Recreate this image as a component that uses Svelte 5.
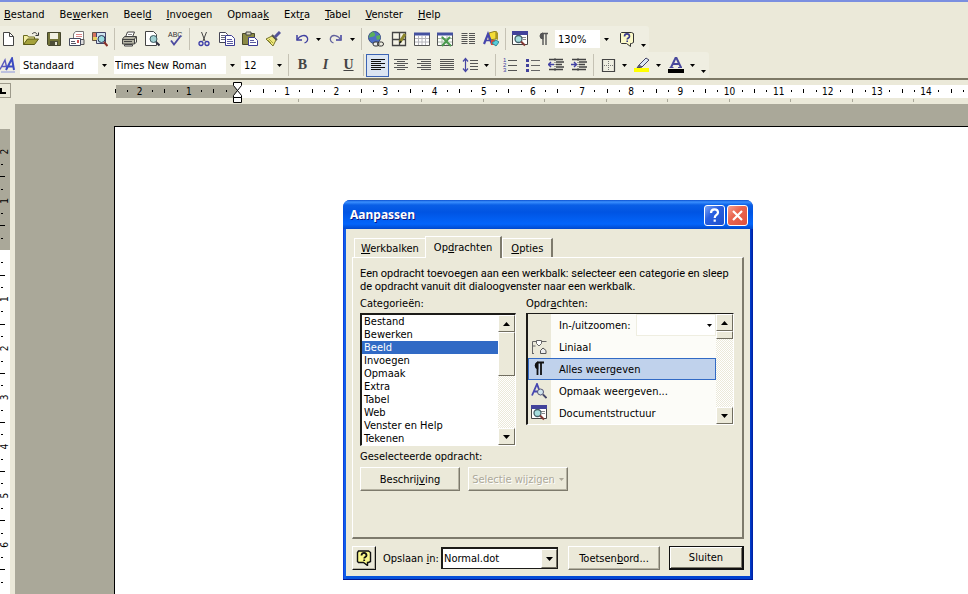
<script lang="ts">
  type ToolItem = {
    icon?: string;
    glyph?: string;
    title?: string;
    kind?: "sep" | "gap" | "arrow" | "more";
    active?: boolean;
  };

  const CM = 49.15;
  const TAB = 61.5;

  const menus = ["&Bestand", "Be&werken", "Beel&d", "&Invoegen", "Opmaa&k", "Ext&ra", "&Tabel", "&Venster", "&Help"];

  const standard: ToolItem[] = [
    { icon: "new", title: "Nieuw" },
    { icon: "open", title: "Openen" },
    { icon: "save", title: "Opslaan" },
    { icon: "mail", title: "E-mail" },
    { icon: "search", title: "Zoeken" },
    { kind: "sep" },
    { icon: "print", title: "Afdrukken" },
    { icon: "preview", title: "Afdrukvoorbeeld" },
    { icon: "spell", title: "Spelling" },
    { kind: "sep" },
    { icon: "cut", title: "Knippen" },
    { icon: "copy", title: "Kopiëren" },
    { icon: "paste", title: "Plakken" },
    { icon: "brush", title: "Opmaak kopiëren" },
    { kind: "gap" },
    { icon: "undo", title: "Ongedaan maken" },
    { kind: "arrow", title: "Acties" },
    { icon: "redo", title: "Opnieuw" },
    { kind: "arrow", title: "Acties" },
    { kind: "sep" },
    { icon: "link", title: "Hyperlink" },
    { icon: "borders", title: "Tabellen en randen" },
    { icon: "table", title: "Tabel invoegen" },
    { icon: "excel", title: "Excel-werkblad" },
    { icon: "columns", title: "Kolommen" },
    { icon: "drawing", title: "Tekenen" },
    { kind: "sep" },
    { icon: "docmap", title: "Documentstructuur" },
    { icon: "pilcrow", title: "Alles weergeven" },
  ];

  const formatting: ToolItem[] = [
    { kind: "sep" },
    { glyph: "B", title: "Vet" },
    { glyph: "I", title: "Cursief" },
    { glyph: "U", title: "Onderstrepen" },
    { kind: "sep" },
    { icon: "left", title: "Links uitlijnen", active: true },
    { icon: "center", title: "Centreren" },
    { icon: "right", title: "Rechts uitlijnen" },
    { icon: "justify", title: "Uitvullen" },
    { icon: "spacing", title: "Regelafstand" },
    { kind: "arrow", title: "Regelafstand kiezen" },
    { kind: "sep" },
    { icon: "numbers", title: "Nummering" },
    { icon: "bullets", title: "Opsommingstekens" },
    { icon: "outdent", title: "Inspringing verkleinen" },
    { icon: "indent", title: "Inspringing vergroten" },
    { kind: "sep" },
    { icon: "frame", title: "Rand" },
    { kind: "arrow", title: "Rand kiezen" },
    { icon: "marker", title: "Markeren" },
    { kind: "arrow", title: "Markeerkleur" },
    { icon: "color", title: "Tekstkleur" },
    { kind: "arrow", title: "Kleur kiezen" },
    { kind: "more", title: "Meer knoppen" },
  ];

  const categories = ["Bestand", "Bewerken", "Beeld", "Invoegen", "Opmaak", "Extra", "Tabel", "Web", "Venster en Help", "Tekenen"];

  const commands = [
    { name: "Liniaal", icon: "ruler" },
    { name: "Alles weergeven", icon: "pilcrowBold" },
    { name: "Opmaak weergeven...", icon: "reveal" },
    { name: "Documentstructuur", icon: "docmap" },
  ];

  let category = $state("Beeld");
  let command = $state("Alles weergeven");
  let rulerWidth = $state(0);
  let rulerHeight = $state(0);

  // from 2 cm before the margin; the last mark has ticks only when its number would not fit
  const marks = (length: number, zero: number) =>
    Array.from({ length: Math.max(0, Math.floor((length - zero - 8) / CM) + 4) }, (_, i) => {
      const n = i - 2;
      const at = zero + n * CM;
      return { n, at, text: n !== 0 && at + 8 <= length ? Math.abs(n) : "" };
    });

  const horizontalMarks = $derived(marks(rulerWidth, 126));
  const verticalMarks = $derived(marks(rulerHeight, 146));
  const tabMarks = $derived(Array.from({ length: Math.max(0, Math.ceil((rulerWidth - 186) / TAB)) }, (_, i) => i));

  const icons: Record<string, string> = {
    new: `<path d="M3.500 1.500h6l4 4v9h-10z" fill="#fff" stroke="#444"/><path d="M9.500 1.500v4h4" fill="none" stroke="#444"/>`,
    open: `<path d="M.5 13.500v-9h4l1 1.500h6v3" fill="#f4efa5" stroke="#6b6b20"/><path d="M.5 13.500l4-5.500h11l-4 5.500z" fill="#a5a23c" stroke="#5a5a18"/><path d="M9 3c2-2 4-2 5 .5m1.500-2v3h-3" fill="none" stroke="#333"/>`,
    save: `<path d="M1.500 1.500h13v13h-12l-1-1z" fill="#73743a" stroke="#44452c"/><path d="M4 2h8v6H4z" fill="#f2f1e2"/><path d="M4 10h8v4.500H4z" fill="#4c4d38"/><path d="M9 11h2v3H9z" fill="#e6e5d4"/>`,
    mail: `<path d="M4.500 8V3l2-2.500h8V9" fill="#fff" stroke="#777"/><path d="M7 3.500h6M7 5.500h6" stroke="#d88"/><path d="M.5 7.500h11v7H.5z" fill="#fff" stroke="#444a60"/><path d="M2 10.500h4M2 12.500h5" stroke="#556"/><path d="M8 9h2v3H8z" fill="#c55"/><path d="M12 8.500h3v5h-3" fill="#ddd" stroke="#555"/>`,
    search: `<path d="M.5 1.500h7v8h-7z" fill="#d6735e" stroke="#654"/><path d="M4.500 1.500h9v11h-9z" fill="#cfe4f0" stroke="#446"/><path d="M1 6h4v3H1z" fill="#e8d060"/><circle cx="9.500" cy="8" r="3.500" fill="#9adce0" stroke="#335"/><path d="M12 11l3.500 4" stroke="#8a3028" stroke-width="2"/>`,
    print: `<path d="M4.500 6l2-5h7l-2 5" fill="#fff" stroke="#444"/><path d="M7 3.500h4" stroke="#888"/><path d="M1.500 8l2-2.500h12l-2 2.500v5h-12z" fill="#b4b3a4" stroke="#444"/><path d="M1.500 8.500h12M3 10.500h8M13.500 13l2-2V6" fill="none" stroke="#444"/><path d="M3.500 13.500h8v1.500h-8z" fill="#eee" stroke="#444"/>`,
    preview: `<path d="M1.500.5h8l3 3v11h-11z" fill="#fff" stroke="#444"/><circle cx="9.500" cy="8" r="3.500" fill="#9fd0d2" stroke="#3f5a60"/><path d="M12 11l3.500 3.500" stroke="#334" stroke-width="2"/>`,
    spell: `<text x="1" y="6" font-family="Liberation Sans" font-size="7" fill="#333">ABC</text><path d="M4 9.500l3 4 7-9" fill="none" stroke="#4b4aa0" stroke-width="1.800"/>`,
    cut: `<path d="M5.500 1l3.500 9M10.500 1L7 10" stroke="#444" fill="none"/><circle cx="5" cy="12.500" r="2" fill="none" stroke="#3b3ba8" stroke-width="1.300"/><circle cx="11" cy="12.500" r="2" fill="none" stroke="#3b3ba8" stroke-width="1.300"/>`,
    copy: `<path d="M.5 1.500h6l2 2v8h-8z" fill="#fff" stroke="#445"/><path d="M2 4.500h4M2 6.500h4M2 8.500h4" stroke="#667"/><path d="M6.500 4.500h6l3 3v7h-9z" fill="#fff" stroke="#3c3c94"/><path d="M8 8.500h5M8 10.500h6M8 12.500h6" stroke="#5a5aa0"/>`,
    paste: `<path d="M.5 2.500h12v11H.5z" fill="#8b8a45" stroke="#4b4a2a"/><path d="M4 1h5v3H4z" fill="#d8d6c0" stroke="#444"/><path d="M6.500 6.500h6l3 3v5h-9z" fill="#fff" stroke="#3c3c94"/><path d="M8 9.500h4M8 11.500h6" stroke="#5a5aa0"/>`,
    brush: `<path d="M1 8l6-3 4 4-3 6z" fill="#eee87c" stroke="#77742c"/><path d="M7 4l5 5" stroke="#555" stroke-width="2"/><path d="M10 6l5-5" stroke="#54549c" stroke-width="3"/><path d="M4 8l4 4M3 9l3 3" stroke="#a9a53c"/>`,
    undo: `<path d="M3 4v5h5" fill="none" stroke="#3f3fa0" stroke-width="1.500"/><path d="M3 9c3-5 9-6 10.500-2 .5 2-.5 4-3 5" fill="none" stroke="#3f3fa0" stroke-width="1.300"/>`,
    redo: `<path d="M13 4v5H8" fill="none" stroke="#3f3fa0" stroke-width="1.500"/><path d="M13 9C10 4 4 3 2.500 7c-.5 2 .5 4 3 5" fill="none" stroke="#62629c" stroke-width="1.300"/>`,
    link: `<circle cx="6.500" cy="6.500" r="6" fill="#4f6fc4" stroke="#394f84"/><path d="M2 3c3-3 4-2 5 0s-2 3-4 3-1 2-2 0zM8 5l4-1v4l-3 1z" fill="#5bb05b"/><rect x="5" y="11" width="6" height="4" rx="2" fill="#eee" stroke="#333"/><rect x="9.500" y="11" width="6" height="4" rx="2" fill="none" stroke="#333"/>`,
    borders: `<path d="M1.500 1.500h13v13h-13zM8.500 1.500v13M1.500 8.500h13" fill="#f5f3e6" stroke="#444" stroke-width="1.300"/><path d="M9 11l5-8" stroke="#8c862c" stroke-width="3"/><path d="M9 12l1-2" stroke="#222" stroke-width="1.500"/>`,
    table: `<path d="M.5 2.500h15v12H.5z" fill="#fff" stroke="#555"/><path d="M0 1.500h16v3H0z" fill="#4451a0"/><path d="M1 7.500h14M1 11h14M4.500 5v9M8 5v9M11.500 5v9" stroke="#b6b6bc"/>`,
    excel: `<path d="M.5 2.500h15v12H.5z" fill="#fff" stroke="#555"/><path d="M0 1.500h16v3H0z" fill="#4451a0"/><path d="M1 7.500h14M1 11h14M5 5v9M10 5v9" stroke="#a9bca9"/><path d="M5 6l9 9M13 6l-8 9" stroke="#4a9a4e" stroke-width="2"/>`,
    columns: `<path d="M1.500 2.500h6M1.500 4.500h6M1.500 6.500h6M1.500 8.500h6M1.500 10.500h6M1.500 12.500h6M9 2.500h6M9 4.500h6M9 6.500h6M9 8.500h6M9 10.500h6M9 12.500h6" stroke="#555"/>`,
    drawing: `<path d="M6 2l7-2v8l-7 1z" fill="#f4dc35" stroke="#8c7e20"/><path d="M13 0l2 2v7l-2-1z" fill="#a99722"/><path d="M1 13L5 3l4 10" fill="none" stroke="#4646ac" stroke-width="2.200"/><path d="M3 9.500h4" stroke="#4646ac" stroke-width="1.500"/><path d="M8 9h4v5H8z" fill="#d24a3b"/><path d="M9 12l4-3 3 2-3 4z" fill="#56ccdc" stroke="#318b96"/>`,
    docmap: `<path d="M.5 1.500h15v12H.5z" fill="#fff" stroke="#444"/><path d="M0 0h16v4H0z" fill="#42429a"/><path d="M10 6.500h4M11 8.500h3" stroke="#888"/><circle cx="6.500" cy="8" r="3.500" fill="#a5dede" stroke="#446068" stroke-width="1.300"/><path d="M9 10.500l4 4" stroke="#833b35" stroke-width="2"/>`,
    pilcrow: `<path d="M8 2v12M11 2v12M7 2.500h6" stroke="#555" stroke-width="1.400"/><path d="M8 2a3 3 0 000 6z" fill="#555" stroke="#555"/>`,
    pilcrowBold: `<path d="M6.500 1v13M10 1v13M6 1.500h7" stroke="#111" stroke-width="1.800"/><path d="M6.500 1.500a3.200 3.200 0 000 6z" fill="#111" stroke="#111" stroke-width="1.500"/>`,
    help: `<path d="M2.500 1.500h10l2 1v9l-2 1h-1v3l-4-3h-5l-1-1v-9z" fill="#fbf9c8" stroke="#333"/><path d="M5.500 5.500c0-3.500 5-3.500 5 0 0 1.500-2.300 1.500-2.300 3M8.200 9.500v1.500" fill="none" stroke="#3b3b8c" stroke-width="1.600"/>`,
    assist: `<path d="M2.500 1h10l2 1.500v9l-2 1h-1v3l-4-3h-5l-1-1v-9z" fill="#fbf98c" stroke="#111" stroke-width="1.400"/><path d="M5.500 5.500c0-3.500 5-3.500 5 0 0 1.500-2.300 1.500-2.300 3M8.200 9.500v1.500" fill="none" stroke="#111" stroke-width="1.800"/>`,
    styles: `<path d="M0 12.500L5 3l2 9M2 9.500h5" fill="none" stroke="#5a5abf" stroke-width="1.400"/><path d="M6 13L12 1.500 14 13M8 9.500h6" fill="none" stroke="#3b4bc0" stroke-width="2"/><path d="M1 15h14" stroke="#8b96dc"/>`,
    left: `<path d="M1 2.500h14M1 4.500h10M1 6.500h14M1 8.500h10M1 10.500h14M1 12.500h10" stroke="#111"/>`,
    center: `<path d="M1 2.500h14M4 4.500h8M1 6.500h14M4 8.500h8M1 10.500h14M4 12.500h8" stroke="#555"/>`,
    right: `<path d="M1 2.500h14M5 4.500h10M1 6.500h14M5 8.500h10M1 10.500h14M5 12.500h10" stroke="#555"/>`,
    justify: `<path d="M1 2.500h14M1 4.500h14M1 6.500h14M1 8.500h14M1 10.500h14M1 12.500h14" stroke="#555"/>`,
    spacing: `<path d="M3.500 2v12M1 4.500L3.500 1.500 6 4.500M1 11.500l2.500 3 2.500-3" fill="none" stroke="#4646a4" stroke-width="1.200"/><path d="M8 3.500h8M8 6.500h8M8 9.500h8M8 12.500h8" stroke="#555"/>`,
    numbers: `<text font-family="Liberation Sans" font-size="6" fill="#3c3ca0"><tspan x="1" y="5">1</tspan><tspan x="1" y="10">2</tspan><tspan x="1" y="15">3</tspan></text><path d="M6 3.500h9M6 8.500h9M6 13.500h9" stroke="#555"/>`,
    bullets: `<path d="M1 2h3v3H1zM1 7h3v3H1zM1 12h3v3H1z" fill="#42429c"/><path d="M6 3.500h9M6 8.500h9M6 13.500h9" stroke="#666"/>`,
    outdent: `<path d="M1 2.500h14M8 5h8M8 7.500h6M8 10h8M1 12.500h14" stroke="#444" stroke-width="1.300"/><path d="M7 1v14" stroke="#555" stroke-dasharray="1 1"/><path d="M0 7.500h6M3 5L.5 7.500 3 10" fill="none" stroke="#4141a4" stroke-width="1.400"/>`,
    indent: `<path d="M1 2.500h14M8 5h8M8 7.500h6M8 10h8M1 12.500h14" stroke="#444" stroke-width="1.300"/><path d="M7 1v14" stroke="#555" stroke-dasharray="1 1"/><path d="M0 7.500h6M3 5l2.500 2.500L3 10" fill="none" stroke="#4141a4" stroke-width="1.400"/>`,
    frame: `<path d="M2.500 2.500h12v12h-12z" fill="none" stroke="#444" stroke-width="1.200"/><path d="M8.500 4v10M4 8.500h10" stroke="#777" stroke-dasharray="1 1"/>`,
    marker: `<path d="M5 8l7-7 3 2-7 7z" fill="#dde8f4" stroke="#446"/><path d="M5 8l-2 3 5-1" fill="#667" stroke="#446"/><path d="M0 11h15v4H0z" fill="#ff0"/>`,
    color: `<path d="M3 10.500L8 0l5 10.500M4.500 7h6" fill="none" stroke="#49499c" stroke-width="2"/><path d="M1.500 10.500h4M10 10.500h4" stroke="#49499c"/><path d="M0 12h16v4H0z" fill="#000"/>`,
    ruler: `<path d="M1.500 14V2.500h4M11 2.500h4.500M1.500 7h3M3 14.500H1" fill="none" stroke="#666"/><path d="M5.500 1.500h5v3L8 7 5.500 4.500z" fill="#fff" stroke="#666"/><path d="M9.500 14.500v-3L12 9l3 2.500v3z" fill="#eee" stroke="#555"/>`,
    reveal: `<path d="M1 12.500L6 1l4 11M3 8.500h6" fill="none" stroke="#4646b0" stroke-width="1.800"/><circle cx="9.500" cy="9" r="3" fill="#d0e4ee" stroke="#557"/><path d="M12 11.500l3.500 3.500" stroke="#446" stroke-width="1.800"/>`,
  };
</script>

{#snippet label(text: string)}
  {@const at = text.indexOf("&")}
  <span>{text.slice(0, at)}<u>{text[at + 1]}</u>{text.slice(at + 2)}</span>
{/snippet}

{#snippet icon(name: string)}
  <svg class="icon" viewBox="0 0 16 16" width="16" height="16" aria-hidden="true">{@html icons[name]}</svg>
{/snippet}

{#snippet down()}
  <svg class="down" viewBox="0 0 5 3" width="5" height="3" aria-hidden="true"><path d="M0 0h5L2.500 3z" fill="currentColor" /></svg>
{/snippet}

{#snippet tools(items: ToolItem[])}
  {#each items as item}
    {#if item.kind === "sep" || item.kind === "gap"}
      <span class="sep" class:line={item.kind === "sep"}></span>
    {:else if item.kind}
      <button type="button" class={item.kind} aria-label={item.title}>{@render down()}</button>
    {:else}
      <button type="button" class="tool" class:active={item.active} aria-label={item.title}>
        {#if item.icon}{@render icon(item.icon)}{:else}<span class="glyph {item.glyph}">{item.glyph}</span>{/if}
      </button>
    {/if}
  {/each}
{/snippet}

{#snippet combo(id: string, name: string, value: string)}
  <span class="combo {id}">
    <select aria-label={name}><option>{value}</option></select>
    <span class="drop">{@render down()}</span>
  </span>
{/snippet}

{#snippet scrollbar(size: string)}
  <div class="scrollbar {size}">
    <button type="button" class="up" aria-label="Omhoog">
      <svg viewBox="0 0 7 4" width="7" height="4"><path d="M0 4h7L3.500 0z" /></svg>
    </button>
    <div class="thumb"></div>
    <button type="button" class="end" aria-label="Omlaag">
      <svg viewBox="0 0 7 4" width="7" height="4"><path d="M0 0h7L3.500 4z" /></svg>
    </button>
  </div>
{/snippet}

<div class="app">
  <header>
    <nav>
      {#each menus as menu}
        <button type="button">{@render label(menu)}</button>
      {/each}
    </nav>
    <div class="toolbar">
      {@render tools(standard)}
      {@render combo("zoom", "In-/uitzoomen", "130%")}
      <button type="button" class="tool" aria-label="Help">{@render icon("help")}</button>
      <button type="button" class="more" aria-label="Meer knoppen">{@render down()}</button>
    </div>
    <div class="toolbar">
      <button type="button" class="tool" aria-label="Stijlen">{@render icon("styles")}</button>
      {@render combo("style", "Stijl", "Standaard")}
      {@render combo("font", "Lettertype", "Times New Roman")}
      {@render combo("size", "Tekengrootte", "12")}
      {@render tools(formatting)}
    </div>
  </header>

  <div class="ruler-row">
    <button type="button" class="tabstop" aria-label="Tabstop">
      <svg viewBox="0 0 6 6" width="6" height="6"><path d="M0 0h2v4h4v2H0z" /></svg>
    </button>
    <div class="ruler" bind:clientWidth={rulerWidth}>
      <svg width="100%" height="24">
        <rect x="4" y="5" width="122" height="13" fill="#aaa899" />
        <rect x="126" y="5" width="100%" height="13" fill="#fff" />
        {#each horizontalMarks as mark}
          {#if mark.text}<text x={mark.at} y="15" text-anchor="middle">{mark.text}</text>{/if}
          <path d="M{Math.round(mark.at - CM / 2)}.500 9v4" stroke="#000" />
          <path d="M{Math.round(mark.at - CM / 4)} 10h1v2h-1zM{Math.round(mark.at + CM / 4)} 10h1v2h-1z" />
        {/each}
        {#each tabMarks as n}
          <path d="M{Math.round(186 + n * TAB)}.500 19v3" stroke="#aaa899" />
        {/each}
        <path d="M121.500 2.500h8v3l-4 5-4-5zM121.500 17.500v-2l4-5 4 5v2zM121.500 17.500h8v5h-8z" fill="#fff" stroke="#000" />
      </svg>
    </div>
  </div>

  <main>
    <div class="side-ruler" bind:clientHeight={rulerHeight}>
      <svg width="10" height="100%">
        <rect y="25" width="10" height="121" fill="#aaa899" />
        <rect y="146" width="10" height="100%" fill="#fff" />
        {#each verticalMarks as mark}
          {#if mark.text}<text transform="translate(8 {mark.at}) rotate(-90)" text-anchor="middle">{mark.text}</text>{/if}
          {#if mark.n > -2}
            <path d="M0 {Math.round(mark.at - CM / 2)}.500h5" stroke="#000" />
            <path d="M1 {Math.round(mark.at - CM / 4)}h2v1h-2z" />
          {/if}
          <path d="M1 {Math.round(mark.at + CM / 4)}h2v1h-2z" />
        {/each}
      </svg>
    </div>
    <div class="desk"><div class="sheet"></div></div>
  </main>

  <div class="dialog" role="dialog" aria-labelledby="dialog-title">
    <div class="titlebar">
      <h1 id="dialog-title">Aanpassen</h1>
      <button type="button" class="caption" aria-label="Help">
        <svg viewBox="0 0 19 19" width="19" height="19"><path d="M6 7c0-5 7-4.500 7-.5 0 2.500-3.300 2.500-3.300 5.500M9.700 13.500v2.200" fill="none" stroke="#fff" stroke-width="2.200" /></svg>
      </button>
      <button type="button" class="caption close" aria-label="Sluiten">
        <svg viewBox="0 0 19 19" width="19" height="19"><path d="M5 5l9 9M14 5l-9 9" stroke="#fff" stroke-width="2.200" /></svg>
      </button>
    </div>
    <div class="content">
      <div class="tabs" role="tablist">
        <button type="button" role="tab" aria-selected="false">{@render label("&Werkbalken")}</button>
        <button type="button" role="tab" aria-selected="true" class="current">{@render label("Op&drachten")}</button>
        <button type="button" role="tab" aria-selected="false">{@render label("&Opties")}</button>
      </div>
      <section role="tabpanel">
        <p>Een opdracht toevoegen aan een werkbalk: selecteer een categorie en sleep<br />de opdracht vanuit dit dialoogvenster naar een werkbalk.</p>
        <div class="lists">
          <div class="field">
            <span id="cat-label">{@render label("Cate&gorieën:")}</span>
            <div class="listbox categories">
              <div class="items" role="listbox" aria-labelledby="cat-label">
                {#each categories as name}
                  <button type="button" role="option" aria-selected={name === category} onclick={() => (category = name)}>{name}</button>
                {/each}
              </div>
              {@render scrollbar("long")}
            </div>
          </div>
          <div class="field wide">
            <span id="cmd-label">{@render label("Opdr&achten:")}</span>
            <div class="listbox commands">
              <div class="items" role="listbox" aria-labelledby="cmd-label">
                <div class="command">
                  <span class="gutter"></span>
                  <label for="zoom-preview">In-/uitzoomen:</label>
                  <span class="combo preview">
                    <select id="zoom-preview"></select>
                    <span class="drop">{@render down()}</span>
                  </span>
                </div>
                {#each commands as c}
                  <button type="button" class="command" role="option" aria-selected={c.name === command} onclick={() => (command = c.name)}>
                    <span class="gutter">{@render icon(c.icon)}</span>
                    <span class="name">{c.name}</span>
                  </button>
                {/each}
              </div>
              {@render scrollbar("short")}
            </div>
          </div>
        </div>
        <span class="chosen">Geselecteerde opdracht:</span>
        <div class="actions">
          <button type="button" class="push">{@render label("Beschrij&ving")}</button>
          <button type="button" class="push" disabled>Selectie wijzigen {@render down()}</button>
        </div>
      </section>
      <footer>
        <button type="button" class="push assist" aria-label="Office-assistent">{@render icon("assist")}</button>
        <label for="save-in">{@render label("Opslaan &in:")}</label>
        <span class="combo template">
          <select id="save-in"><option>Normal.dot</option></select>
          <span class="drop"><svg viewBox="0 0 7 4" width="7" height="4"><path d="M0 0h7L3.500 4z" /></svg></span>
        </span>
        <button type="button" class="push keys">{@render label("Toetsen&bord...")}</button>
        <button type="button" class="push default">Sluiten</button>
      </footer>
    </div>
  </div>
</div>

<style>
  :global(body) {
    background: #ebe9d9;
  }
  .app {
    position: relative;
    display: flex;
    flex-direction: column;
    min-height: 100vh;
    overflow: hidden;
    color: #000;
    font: 11px/13px "DejaVu Sans Condensed", Tahoma, sans-serif;
  }
  button,
  select {
    font: inherit;
    color: inherit;
    margin: 0;
    padding: 0;
    border: none;
    border-radius: 0;
    background: transparent;
    white-space: nowrap;
  }
  select {
    appearance: none;
    outline: none;
  }
  svg {
    display: block;
    flex-shrink: 0;
  }
  header {
    border-top: 2px solid #7b8fe0;
    border-bottom: 2px solid #7d7966;
  }
  nav {
    display: flex;
    gap: 15px;
    height: 24px;
    padding-left: 4px;
  }
  .toolbar {
    display: flex;
    align-items: center;
    width: max-content;
    height: 26px;
    margin-left: -4px;
    background: #efeee1;
    border-radius: 0 3px 3px 0;
  }
  .tool {
    display: grid;
    place-items: center;
    width: 23px;
    height: 23px;
  }
  .tool.active {
    background: #dbe5f3;
    border: 1px solid #3c64b4;
  }
  .sep {
    width: 6px;
    height: 22px;
  }
  .sep.line {
    width: 3px;
    margin-right: 2px;
    border-right: 1px solid #c5c2b4;
  }
  .arrow,
  .more {
    display: grid;
    place-items: center;
    width: 11px;
    height: 22px;
  }
  .more {
    align-items: end;
    padding-bottom: 3px;
  }
  .glyph {
    font: bold 14px/16px "Liberation Serif", serif;
    color: #444;
  }
  .glyph.I {
    font-style: italic;
  }
  .glyph.U {
    text-decoration: underline;
  }
  .combo {
    display: grid;
    grid-template-columns: 1fr 12px;
    height: 18px;
    background: #fff;
  }
  .combo select {
    grid-area: 1 / 1 / 2 / 3;
    width: 100%;
    min-width: 0;
    padding-left: 3px;
  }
  .drop {
    grid-area: 1 / 2;
    display: grid;
    place-items: center;
    background: #efeee1;
    pointer-events: none;
  }
  .zoom {
    width: 57px;
    margin: 0 3px 0 1px;
  }
  .style {
    width: 90px;
    margin: 0 4px 0 1px;
  }
  .font {
    width: 124px;
    margin-right: 3px;
  }
  .font select {
    padding-left: 1px;
  }
  .size {
    width: 44px;
  }
  .ruler-row {
    display: flex;
    height: 24px;
  }
  .tabstop {
    display: grid;
    place-items: center start;
    width: 11px;
    height: 15px;
    margin: 3px 101px 0 0;
    border: 1px solid #9d9a8b;
    border-left: none;
    flex-shrink: 0;
  }
  .ruler {
    flex: 1;
    min-width: 0;
  }
  .ruler text,
  .side-ruler text {
    font-size: 10px;
  }
  main {
    display: flex;
    flex: 1;
  }
  .side-ruler {
    display: flex;
    width: 10px;
    margin-right: 5px;
  }
  .side-ruler svg {
    height: auto;
  }
  .desk {
    display: flex;
    flex: 1;
    padding: 22px 0 0 99px;
    background: #aaa899;
  }
  .sheet {
    flex: 1;
    background: #fff;
    border: 1px solid #000;
    border-width: 1px 0 0 1px;
  }
  .dialog {
    position: absolute;
    left: 343px;
    top: 200px;
    width: 410px;
    box-sizing: border-box;
    padding: 0 3px 3px;
    border-radius: 7px 7px 0 0;
    background: linear-gradient(90deg, #0831d9, #166aee 2px, #0855dd 3px, #0040d0 407px, #001ea0);
    border-bottom: 1px solid #001590;
  }
  .titlebar {
    display: flex;
    align-items: center;
    gap: 2px;
    height: 29px;
    margin: 0 -3px;
    padding: 1px 5px 0 7px;
    box-sizing: border-box;
    border-radius: 7px 7px 0 0;
    background: linear-gradient(#0a4fd0, #3b90ff 2px, #0a5fe6 5px, #0054e3 12px, #0365fb 24px, #0148cc);
  }
  h1 {
    flex: 1;
    margin: 0;
    color: #fff;
    font: bold 12px/20px "Noto Sans", sans-serif;
    text-shadow: 1px 1px #0a1883;
  }
  .caption {
    width: 21px;
    height: 21px;
    border: 1px solid #fff;
    border-radius: 3px;
    background: linear-gradient(135deg, #7ba4f4, #2a5fe0 40%, #1c4fcb);
  }
  .close {
    background: linear-gradient(135deg, #f5a090, #ea6650 40%, #e0503c);
  }
  .content {
    padding: 7px 6px 6px;
    background: #ebe9d9;
  }
  .tabs {
    display: flex;
    align-items: flex-end;
    padding-left: 2px;
  }
  .tabs button {
    height: 19px;
    padding: 0 6px;
    border: 1px solid #fff;
    border-width: 1px 0 0 1px;
  }
  .tabs button:last-child {
    padding: 0 8px;
    border-right: 2px solid #7d7a6c;
  }
  .tabs .current {
    height: 22px;
    padding: 0 8px 1px;
    margin-bottom: -1px;
    border-right: 2px solid #7d7a6c;
    background: #ebe9d9;
    z-index: 1;
  }
  section {
    display: flex;
    flex-direction: column;
    height: 270px;
    padding: 9px 8px 0 7px;
    border: 1px solid #fff;
    border-right: 2px solid #7d7a6c;
    border-bottom: 2px solid #7d7a6c;
  }
  p {
    margin: 0 0 4px;
    font-family: Roboto, sans-serif;
    white-space: nowrap;
  }
  .lists {
    display: flex;
    gap: 10px;
    height: 149px;
  }
  .field {
    display: flex;
    flex-direction: column;
    gap: 3px;
    width: 156px;
  }
  .field.wide {
    flex: 1;
    width: auto;
  }
  .listbox {
    display: flex;
    border: 1px solid #fff;
    border-top: 2px solid #1c1b18;
    border-left: 2px solid #1c1b18;
    background: #fff;
  }
  .items {
    flex: 1;
    display: flex;
    flex-direction: column;
    min-width: 0;
  }
  .categories button[role="option"] {
    height: 13px;
    padding-left: 2px;
    text-align: left;
  }
  .categories button[aria-selected="true"] {
    background: #316ac5;
    color: #fff;
  }
  .commands {
    border-top-width: 1px;
    background: linear-gradient(90deg, #ebe9d9 23px, #fcfcf8 23px);
  }
  .command {
    display: flex;
    align-items: center;
    box-sizing: border-box;
    height: 22px;
    text-align: left;
    border: 1px solid transparent;
  }
  .commands [aria-selected="true"] {
    background: #c0d2ec;
    border-color: #316ac5;
  }
  .gutter {
    width: 30px;
    padding-left: 2px;
    box-sizing: border-box;
  }
  .preview {
    flex: 1;
    height: 20px;
    margin-left: 6px;
    outline: 1px solid #efeee1;
  }
  .preview .drop {
    background: #fff;
  }
  .scrollbar {
    display: flex;
    flex-direction: column;
    width: 17px;
    background: repeating-conic-gradient(#fff 0 25%, #ebe9d9 0 50%) 0 0 / 2px 2px;
  }
  .scrollbar button,
  .thumb {
    box-sizing: border-box;
    background: #ebe9d9;
    border: 1px solid #fff;
    border-right-color: #716e60;
    border-bottom-color: #716e60;
  }
  .scrollbar button {
    display: grid;
    place-items: center;
    height: 17px;
  }
  .long .thumb {
    height: 44px;
  }
  .short .thumb {
    height: 8px;
  }
  .scrollbar .end {
    margin-top: auto;
  }
  .chosen {
    display: block;
    margin: 4px 0;
  }
  .actions {
    display: flex;
    gap: 8px;
  }
  .push {
    display: flex;
    align-items: center;
    justify-content: center;
    gap: 4px;
    box-sizing: border-box;
    width: 100px;
    height: 24px;
    border: 1px solid #fff;
    border-right-color: #7d7a6c;
    border-bottom-color: #7d7a6c;
    box-shadow: inset -1px -1px #b5b2a2;
  }
  .push:disabled {
    color: #aca899;
    text-shadow: 1px 1px #fff;
  }
  footer {
    display: flex;
    align-items: center;
    padding-top: 7px;
  }
  footer label {
    margin-left: 7px;
  }
  .push.assist {
    width: 24px;
    border-right-color: #111;
    border-bottom-color: #111;
  }
  .template {
    grid-template-columns: 1fr 16px;
    box-sizing: border-box;
    width: 117px;
    height: 22px;
    margin: 0 10px 0 auto;
    border: 2px solid #1c1b18;
    border-width: 2px 1px 1px 2px;
  }
  .template select {
    padding-left: 1px;
  }
  .template .drop {
    background: #ebe9d9;
    border: 1px solid #fff;
    border-right-color: #716e60;
    border-bottom-color: #716e60;
  }
  .push.keys {
    width: 92px;
    margin-right: 9px;
  }
  .push.default {
    width: 75px;
    border: 2px solid #111;
    border-width: 1px 2px 2px 1px;
    box-shadow: inset 1px 1px #fff, inset -1px -1px #7d7a6c;
  }
</style>
